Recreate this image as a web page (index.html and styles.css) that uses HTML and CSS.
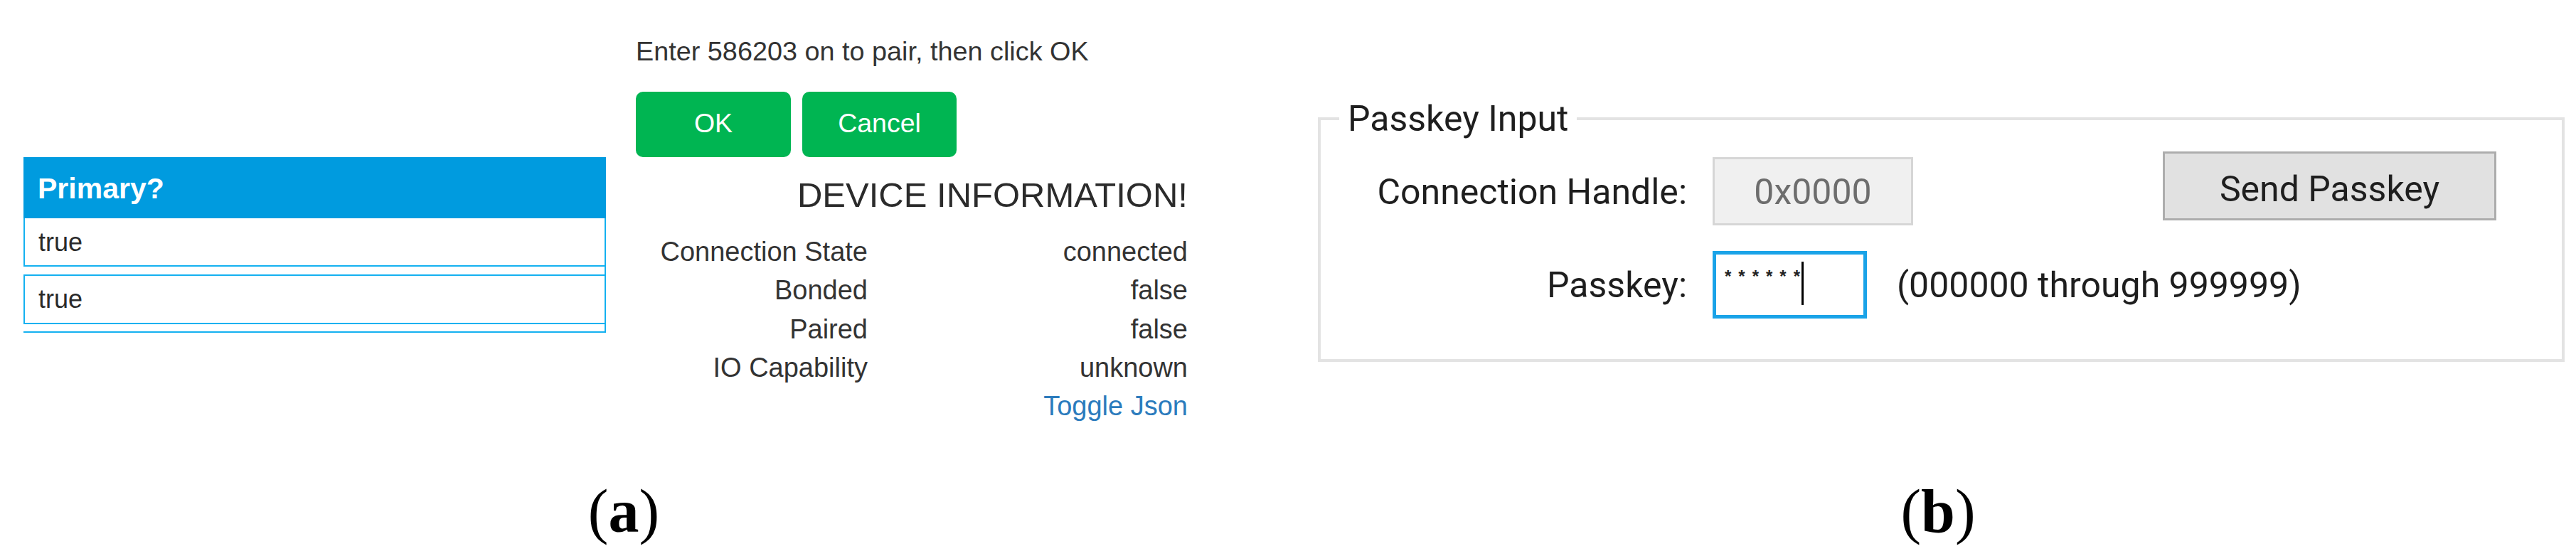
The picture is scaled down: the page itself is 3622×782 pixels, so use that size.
FILE: index.html
```html
<!DOCTYPE html>
<html lang="en">
<head>
<meta charset="utf-8">
<title>Pairing dialogs</title>
<link rel="stylesheet" href="styles.css">
</head>
<body>
<div class="figure">
  <div class="panels">
    <div class="panel-a">
      <div class="tbl">
        <div class="tbl-head">Primary?</div>
        <div class="tbl-row r1">true</div>
        <div class="tbl-gap"></div>
        <div class="tbl-row r2">true</div>
        <div class="tbl-gap g2"></div>
        <div class="tbl-cut"></div>
      </div>
      <div class="dialog">
        <p class="prompt">Enter 586203 on to pair, then click OK</p>
        <div class="actions">
          <button class="btn btn-ok">OK</button>
          <button class="btn btn-cancel">Cancel</button>
        </div>
        <h2 class="dev-title">DEVICE INFORMATION!</h2>
        <dl class="info">
          <dt>Connection State</dt><dd>connected</dd>
          <dt>Bonded</dt><dd>false</dd>
          <dt>Paired</dt><dd>false</dd>
          <dt>IO Capability</dt><dd>unknown</dd>
          <dt></dt><dd><a class="toggle">Toggle Json</a></dd>
        </dl>
      </div>
    </div>
    <fieldset class="group">
      <legend class="group-title">Passkey Input</legend>
      <div class="grow row-handle">
        <label class="lbl">Connection Handle:</label>
        <div class="tb tb-disabled">0x0000</div>
        <button class="win-btn">Send Passkey</button>
      </div>
      <div class="grow row-passkey">
        <label class="lbl">Passkey:</label>
        <div class="tb tb-focused"><span class="mask">******</span><span class="caret"></span></div>
        <span class="hint">(000000 through 999999)</span>
      </div>
    </fieldset>
  </div>
  <div class="captions">
    <div class="cap cap-a">(<b>a</b>)</div>
    <div class="cap cap-b">(<b>b</b>)</div>
  </div>
</div>
</body>
</html>
```
FILE: styles.css
```css
* { box-sizing: border-box; }
html, body { margin: 0; padding: 0; background: #fff; }
body { width: 3622px; height: 782px; overflow: hidden; }

.figure { display: flex; flex-direction: column; }
.panels { display: flex; align-items: flex-start; height: 669px; }

/* ---------- panel (a) ---------- */
.panel-a { display: flex; align-items: flex-start; }

.tbl {
  margin: 221px 0 0 33px;
  width: 819px;
  font-family: "Liberation Sans", Arial, sans-serif;
}
.tbl-head {
  background: #009bdf;
  color: #fff;
  font-weight: bold;
  font-size: 41px;
  line-height: 48px;
  height: 86px;
  padding: 20px 0 18px 20px;
}
.tbl-row {
  border: 2px solid #14b1f0;
  color: #2a2a2a;
  font-size: 36px;
  line-height: 40px;
  padding-left: 19px;
}
.tbl-row.r1 { border-top: 0; padding-top: 14px; padding-bottom: 12px; }
.tbl-row.r2 { padding-top: 13px; padding-bottom: 13px; }
.tbl-gap { height: 11px; border-right: 2px solid #14b1f0; }
.tbl-gap.g2 { height: 10px; }
.tbl-cut { border-top: 2px solid #14b1f0; }

.dialog {
  margin: 51px 0 0 42px;
  width: 776px;
  font-family: "Liberation Sans", Arial, sans-serif;
  color: #333;
}
.prompt { margin: 0; font-size: 37.8px; line-height: 42px; }
.actions { display: flex; gap: 16px; margin-top: 36px; }
.btn {
  height: 92px;
  border: 0;
  border-radius: 10px;
  background: #00b552;
  color: #fff;
  font-family: "Liberation Sans", Arial, sans-serif;
  font-size: 37.5px;
  line-height: 42px;
  padding: 23px 0 27px;
}
.btn-ok { width: 218px; }
.btn-cancel { width: 217px; }
.dev-title {
  margin: 26px 0 0;
  font-weight: normal;
  font-size: 49px;
  line-height: 55px;
  text-align: right;
  color: #2b2b2b;
}
.info {
  display: grid;
  grid-template-columns: 326px 450px;
  margin: 25px 0 0;
  font-size: 38px;
  line-height: 54.3px;
  text-align: right;
}
.info dt, .info dd { margin: 0; }
.toggle { color: #2b7bbd; }

/* ---------- panel (b) ---------- */
.group {
  margin: 137px 0 0 183px;
  width: 1753px;
  border: 4px solid #e3e3e3;
  padding: 16px 0 57px 26px;
  min-width: 0;
  font-family: Roboto, "Liberation Sans", sans-serif;
  font-size: 50px;
  line-height: 60px;
  color: #1e1e1e;
}
.group-title { padding: 0 12px; }
.grow { display: flex; align-items: flex-start; }
.row-passkey { margin-top: 36px; }
.lbl { width: 489px; text-align: right; margin-right: 36px; }
.row-handle .lbl { margin-top: 27px; }
.row-passkey .lbl { margin-top: 18px; }

.tb { font-family: inherit; }
.tb-disabled {
  margin-top: 8px;
  width: 282px;
  height: 96px;
  border: 3px solid #d6d6d6;
  background: #f0f0f0;
  padding-top: 16px;
  text-align: center;
  color: #6d6d6d;
}
.tb-focused {
  width: 217px;
  height: 95px;
  border: 5px solid #1aa3e8;
  background: #fff;
  padding: 10px 0 0 12px;
  display: flex;
  align-items: flex-start;
}
.mask {
  font-family: "Liberation Sans", Arial, sans-serif;
  font-size: 24px;
  line-height: 20px;
  letter-spacing: 10px;
  margin-top: 11px;
  font-weight: bold;
  color: #222;
}
.caret { width: 3px; height: 61px; background: #000; margin-left: -8px; }

.win-btn {
  margin-left: 351px;
  width: 469px;
  height: 97px;
  border: 3px solid #adadad;
  background: #e1e1e1;
  padding: 20px 0 11px;
  font-family: Roboto, "Liberation Sans", sans-serif;
  font-size: 50px;
  line-height: 60px;
  color: #1e1e1e;
}
.hint { margin: 18px 0 0 42px; }

/* ---------- captions ---------- */
.captions { display: flex; }
.cap {
  font-family: "Liberation Serif", "Times New Roman", serif;
  font-size: 86px;
  line-height: 100px;
  text-align: center;
  color: #000;
}
.cap-a { width: 1754px; }
.cap-b { width: 1794px; margin-left: 74px; }
```
